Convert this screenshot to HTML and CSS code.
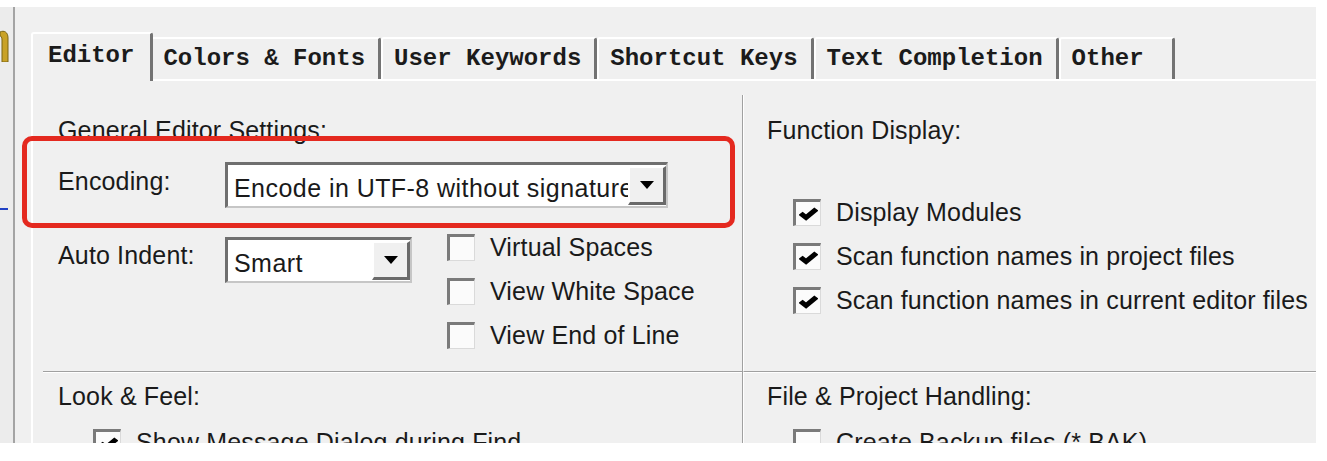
FILE: index.html
```html
<!DOCTYPE html>
<html lang="en">
<head>
  <meta charset="UTF-8" />
  <title>Preferences - Editor</title>
  <link rel="stylesheet" href="styles.css">
</head>
<body>

  <div class="shot">
    <div class="edge">
      <svg class="edge-glyph" width="9" height="34" viewBox="0 0 9 34">
        <path d="M0 4 C4 2 8 4 8 10 L8 34 L2 34 L2 12 C2 9 1 8 0 8 Z" fill="#c9a227" stroke="#7a6414" stroke-width="1" />
      </svg>
      <span class="edge-mark"></span>
    </div>

    <div class="dialog">
      <div class="tabs">
        <div class="tab active">Editor</div>
        <div class="tab">Colors &amp; Fonts</div>
        <div class="tab">User Keywords</div>
        <div class="tab">Shortcut Keys</div>
        <div class="tab">Text Completion</div>
        <div class="tab last">Other</div>
      </div>

      <div class="panel">
        <div class="group top left-col">
          <div class="group-title">General Editor Settings:</div>

          <div class="field field-encoding">
            <span class="field-label">Encoding:</span>
            <div class="combo combo-wide">
              <span class="combo-text">Encode in UTF-8 without signature</span>
              <span class="combo-btn"></span>
            </div>
          </div>

          <div class="field field-indent">
            <span class="field-label">Auto Indent:</span>
            <div class="combo combo-short">
              <span class="combo-text">Smart</span>
              <span class="combo-btn"></span>
            </div>
            <div class="check-list">
              <div class="check"><span class="box"></span>Virtual Spaces</div>
              <div class="check"><span class="box"></span>View White Space</div>
              <div class="check"><span class="box"></span>View End of Line</div>
            </div>
          </div>
        </div>

        <div class="group top right-col">
          <div class="group-title">Function Display:</div>
          <div class="check-list check-list-right">
            <div class="check">
              <span class="box"><svg class="tick" viewBox="0 0 7 7" preserveAspectRatio="none"><path d="M0.6 3.4 L2.6 5.4 L6.4 1.4" /></svg></span>Display Modules
            </div>
            <div class="check">
              <span class="box"><svg class="tick" viewBox="0 0 7 7" preserveAspectRatio="none"><path d="M0.6 3.4 L2.6 5.4 L6.4 1.4" /></svg></span>Scan function names in project files
            </div>
            <div class="check">
              <span class="box"><svg class="tick" viewBox="0 0 7 7" preserveAspectRatio="none"><path d="M0.6 3.4 L2.6 5.4 L6.4 1.4" /></svg></span>Scan function names in current editor files
            </div>
          </div>
        </div>

        <div class="group bottom left-col">
          <div class="group-title">Look &amp; Feel:</div>
          <div class="check-list check-list-low">
            <div class="check">
              <span class="box"><svg class="tick" viewBox="0 0 7 7" preserveAspectRatio="none"><path d="M0.6 3.4 L2.6 5.4 L6.4 1.4" /></svg></span>Show Message Dialog during Find
            </div>
          </div>
        </div>

        <div class="group bottom right-col">
          <div class="group-title">File &amp; Project Handling:</div>
          <div class="check-list check-list-right check-list-low">
            <div class="check"><span class="box"></span>Create Backup files (*.BAK)</div>
          </div>
        </div>
      </div>
    </div>

    <div class="highlight"></div>
  </div>

</body>
</html>
```

FILE: styles.css
```css
body {
  margin: 0;
  background: #fff;
  font-family: "Liberation Sans", Arial, sans-serif;
}

.shot {
  position: relative;
  display: flex;
  width: 1316px;
  height: 436px;
  margin-top: 7px;
  background: #f0f0f0;
  overflow: hidden;
}

/* clipped window behind the dialog */
.edge {
  flex: none;
  width: 13px;
  border-right: 2px solid #a4a4a4;
  background: #ececec;
}

.edge-glyph {
  display: block;
  margin-top: 21px;
}

.edge-mark {
  display: block;
  width: 8px;
  height: 2px;
  margin-top: 146px;
  background: #2142c4;
}

.dialog {
  flex: 1;
  padding: 25px 0 0 16px;
}

/* tab strip */
.tabs {
  display: flex;
  align-items: flex-end;
  height: 47px;
}

.tab {
  font: bold 24px/28px "Liberation Mono", monospace;
  color: #1b1b1b;
  white-space: pre;
  padding: 6px 13px 6px 11px;
  background: #f0f0f0;
  border-top: 2px solid #fff;
  border-left: 2px solid #fff;
  border-right: 3px solid #737373;
  border-top-left-radius: 3px;
  border-top-right-radius: 3px;
}

.tab.active {
  position: relative;
  z-index: 1;
  padding: 8px 16px 11px 15px;
  margin-bottom: -2px;
  margin-right: -3px;
}

.tab.last {
  padding-right: 28px;
}

/* tab page */
.panel {
  display: grid;
  grid-template-columns: 700px 1fr;
  grid-template-rows: 276px auto;
  padding: 14px 0 0 10px;
  border-top: 2px solid #fff;
  border-left: 2px solid #fff;
  font-size: 25px;
  line-height: 28px;
  letter-spacing: 0.15px;
  color: #1a1a1a;
}

.group {
  white-space: nowrap;
}

.left-col {
  padding-left: 15px;
  border-right: 1px solid #a0a0a0;
}

.right-col {
  padding-left: 23px;
  border-left: 1px solid #fff;
}

.top .group-title {
  margin-top: 21px;
}

.bottom {
  padding-top: 10px;
  border-top: 1px solid #a0a0a0;
  box-shadow: inset 0 1px #fff;
}

.field {
  display: flex;
  align-items: flex-start;
}

.field-label {
  flex: none;
  width: 167px;
  margin-top: 5px;
}

.field-encoding {
  margin-top: 18px;
}

.field-indent {
  margin-top: 25px;
}

.field-indent .field-label {
  margin-top: 8px;
}

/* drop-down lists */
.combo {
  display: flex;
  box-sizing: border-box;
  height: 46px;
  background: #fff;
  border-style: solid;
  border-width: 3px 2px 2px 3px;
  border-color: #6f6f6f #c6c6c6 #c6c6c6 #6f6f6f;
}

.combo-wide {
  width: 443px;
}

.combo-short {
  width: 187px;
  margin-top: 4px;
}

.combo-text {
  flex: 1;
  min-width: 0;
  overflow: hidden;
  padding: 9px 0 0 6px;
  letter-spacing: 0.45px;
}

.combo-btn {
  flex: none;
  display: flex;
  align-items: center;
  justify-content: center;
  box-sizing: border-box;
  width: 38px;
  margin: 1px 0;
  background: #f0f0f0;
  border-style: solid;
  border-width: 2px 3px 3px 2px;
  border-color: #fff #6a6a6a #6a6a6a #fff;
}

.combo-btn::after {
  content: "";
  border-left: 7px solid transparent;
  border-right: 7px solid transparent;
  border-top: 8px solid #000;
}

/* check boxes */
.check-list {
  display: flex;
  flex-direction: column;
  gap: 16px;
  margin-left: 35px;
}

.check-list-right {
  margin-left: 26px;
  margin-top: 54px;
}

.check-list-low {
  margin-top: 18px;
}

.check {
  display: flex;
  align-items: center;
  gap: 15px;
}

.box {
  flex: none;
  display: flex;
  align-items: center;
  justify-content: center;
  box-sizing: border-box;
  width: 28px;
  height: 27px;
  background: #fbfbfb;
  border-style: solid;
  border-width: 3px 1px 1px 3px;
  border-color: #7a7a7a #dadada #dadada #7a7a7a;
}

.tick {
  width: 19px;
  height: 15px;
}

.tick path {
  fill: none;
  stroke: #000;
  stroke-width: 2.1;
}

/* red annotation frame drawn over the screenshot */
.highlight {
  position: absolute;
  left: 22px;
  top: 129px;
  width: 713px;
  height: 92px;
  box-sizing: border-box;
  border: 5px solid #e4291f;
  border-radius: 10px;
  pointer-events: none;
}
```
